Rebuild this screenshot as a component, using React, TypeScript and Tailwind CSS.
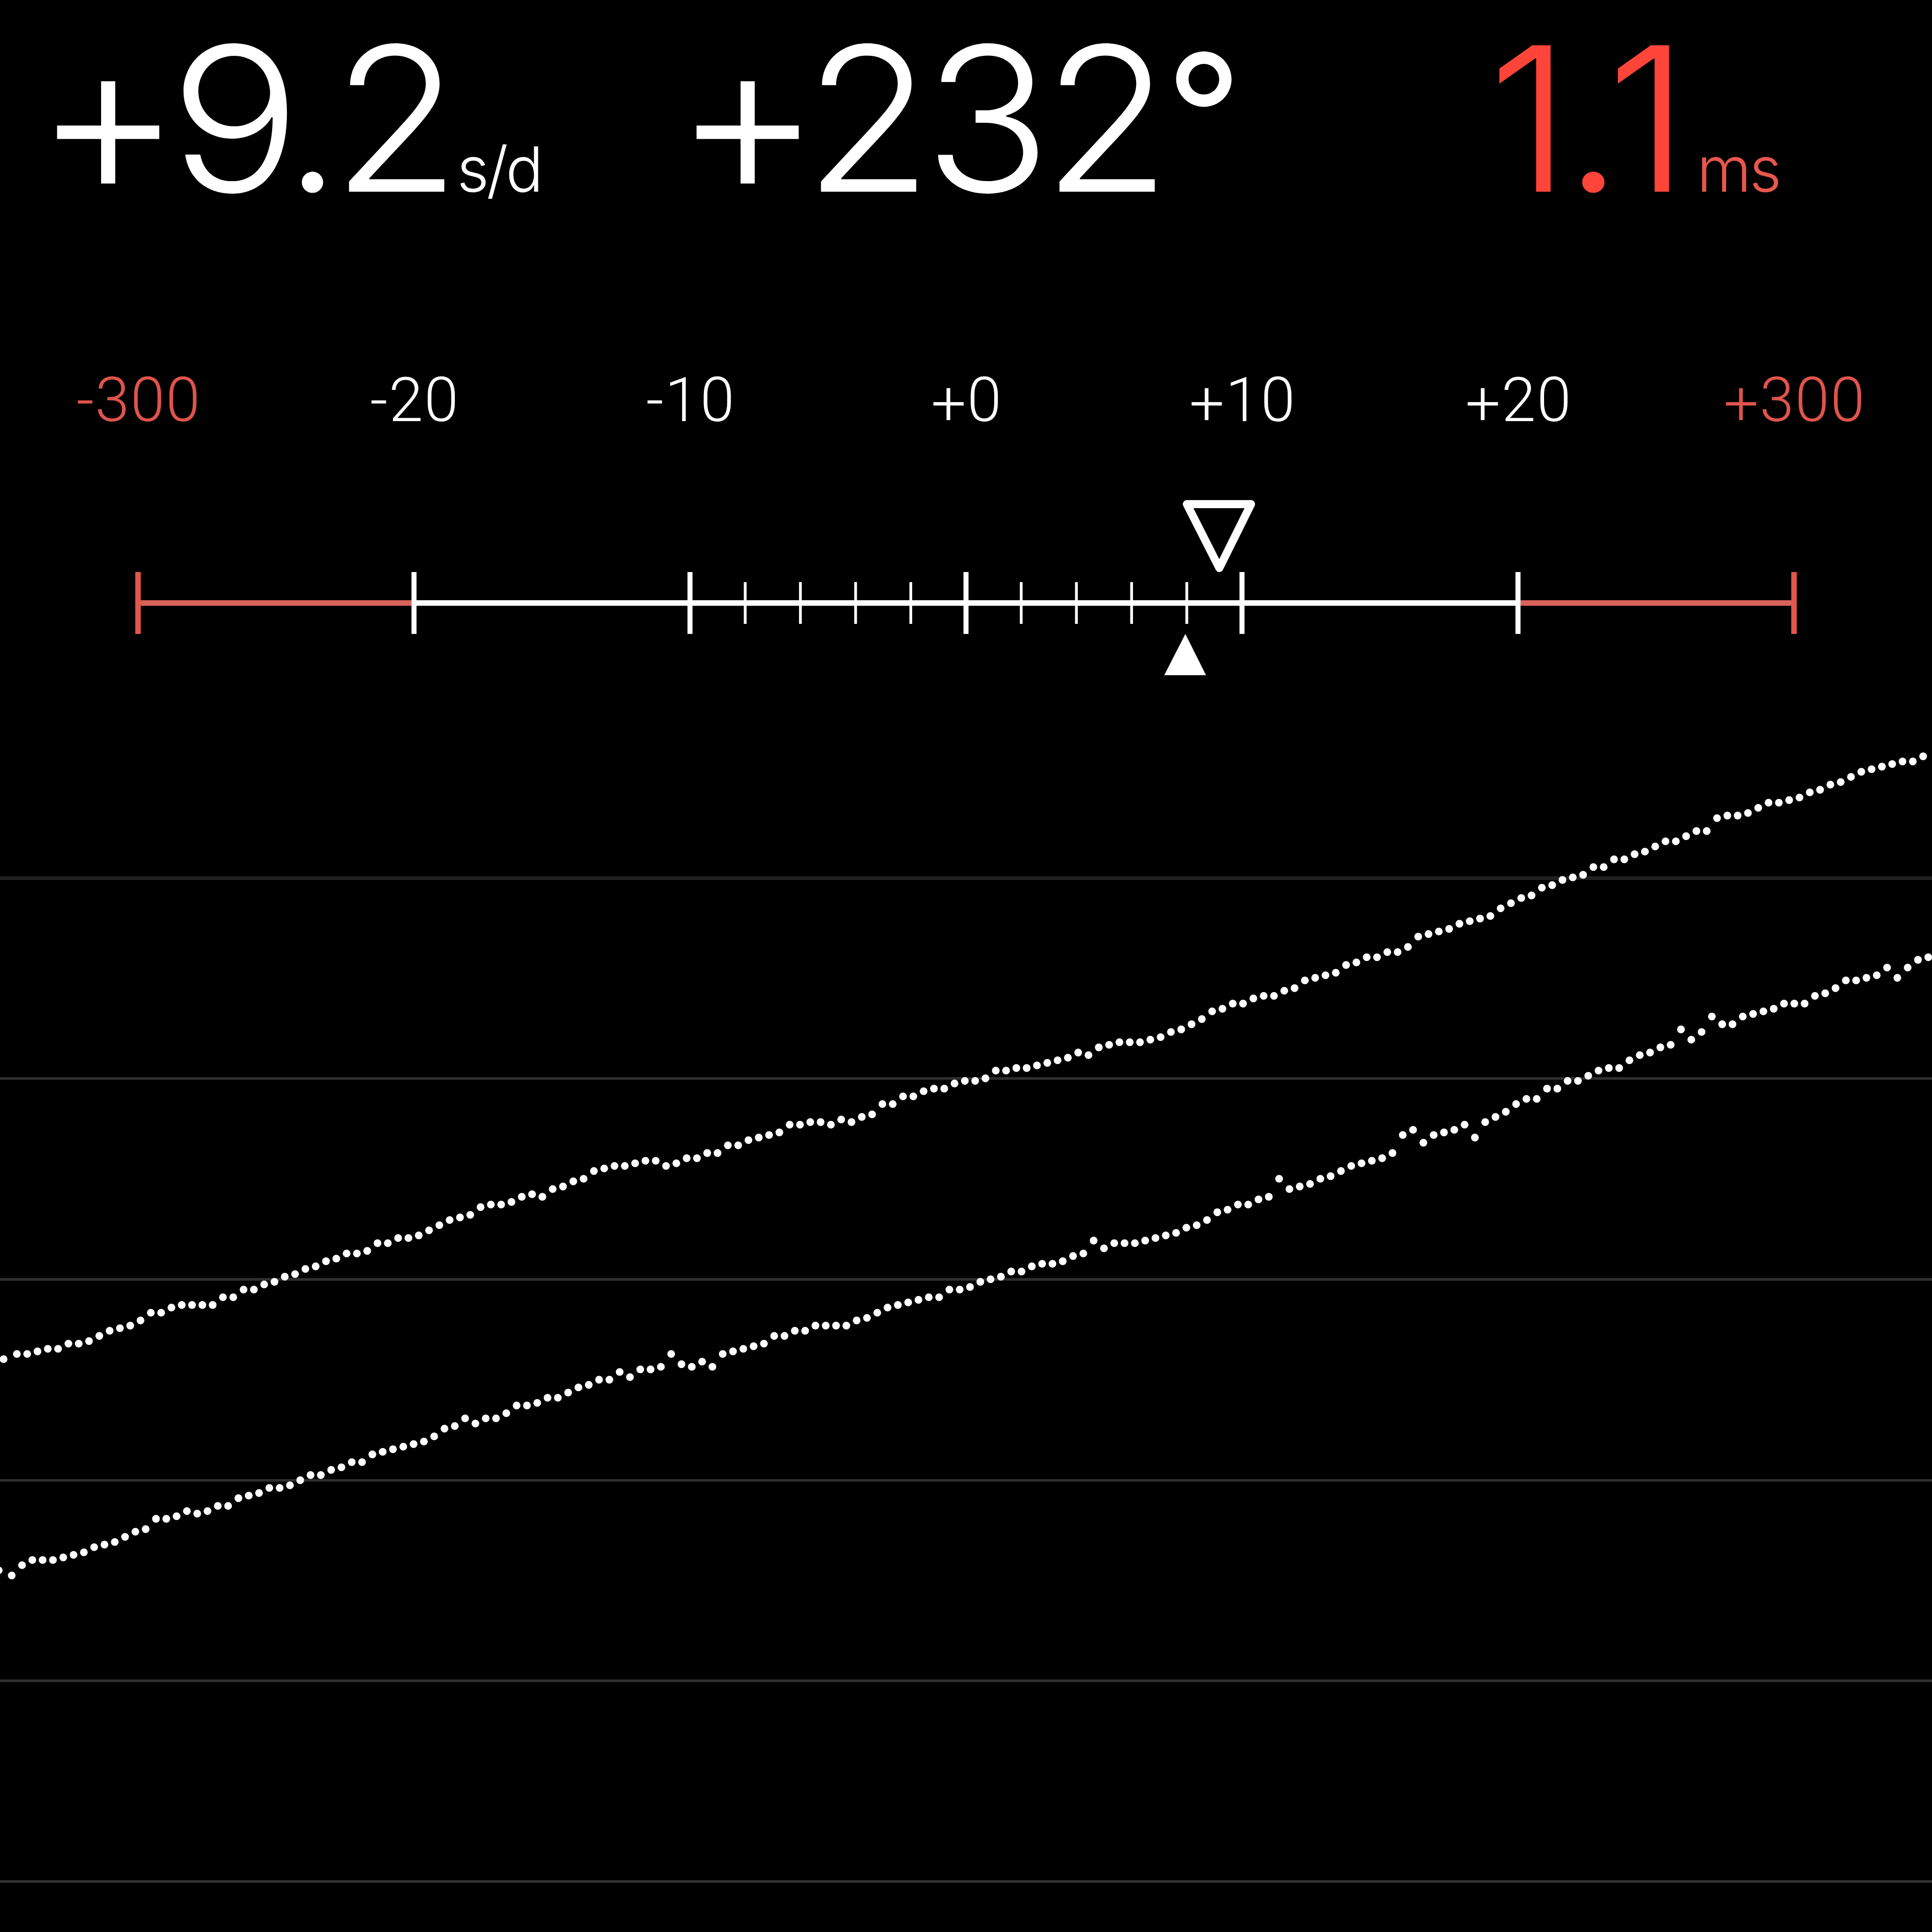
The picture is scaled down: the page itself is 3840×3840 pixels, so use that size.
const UPPER = [
  525, 525, 524, 523, 523, 521, 521, 520, 518, 516, 515, 514, 512, 509, 509, 507, 506, 506, 506, 506, 503, 503, 500, 500,
  498, 497, 495, 494, 492, 491, 489, 488, 486, 486, 485, 482, 482, 480, 480, 479, 477, 475, 473, 472, 471, 468, 467, 467,
  466, 464, 463, 464, 461, 460, 458, 457, 454, 453, 452, 452, 451, 450, 450, 452, 451, 449, 449, 447, 447, 444, 444, 442,
  441, 440, 439, 436, 436, 435, 435, 436, 434, 435, 433, 432, 428, 428, 425, 425, 423, 422, 422, 420, 419, 419, 418, 415,
  415, 414, 414, 413, 412, 411, 410, 408, 409, 406, 405, 404, 404, 404, 403, 402, 400, 399, 397, 395, 392, 391, 389, 389,
  387, 386, 386, 384, 383, 380, 379, 378, 377, 374, 373, 371, 371, 369, 369, 367, 363, 362, 361, 360, 358, 357, 356, 355,
  352, 350, 348, 347, 344, 343, 341, 340, 339, 336, 336, 333, 333, 331, 330, 328, 326, 326, 324, 322, 322, 317, 316, 316,
  315, 313, 311, 311, 310, 309, 307, 306, 304, 303, 301, 299, 298, 297, 296, 295, 295, 293,
]

const LOWER = [
  611, 607, 605, 605, 605, 604, 603, 602, 600, 599, 598, 596, 594, 593, 589, 589, 588, 586, 587, 586, 584, 584, 581, 580,
  579, 577, 577, 576, 574, 572, 572, 570, 569, 567, 567, 564, 563, 562, 561, 560, 559, 557, 554, 553, 550, 552, 550, 550,
  548, 545, 545, 544, 542, 542, 540, 538, 537, 535, 535, 532, 534, 531, 531, 530, 525, 529, 530, 528, 530, 525, 524, 523,
  522, 521, 518, 518, 516, 516, 514, 514, 514, 514, 512, 511, 509, 507, 506, 505, 504, 503, 503, 500, 500, 499, 497, 496,
  495, 493, 493, 491, 490, 490, 489, 487, 486, 481, 484, 482, 482, 482, 481, 480, 479, 478, 476, 475, 473, 470, 469, 467,
  467, 465, 464, 457, 461, 460, 459, 457, 456, 454, 452, 451, 450, 449, 447, 440, 438, 443, 440, 439, 438, 436, 441, 435,
  433, 431, 428, 426, 426, 422, 422, 419, 419, 417, 415, 414, 414, 411, 409, 408, 406, 405, 399, 403, 400, 394, 397, 397,
  394, 393, 392, 391, 389, 389, 389, 386, 385, 383, 380, 380, 379, 378, 375, 379, 375, 372, 371,
]

const GRID = [418.65, 496.65, 574.65, 652.5, 730.4]

const LABELS = ['-300', '-20', '-10', '+0', '+10', '+20', '+300']

const MAJOR = [1, 2, 3, 4, 5]
const MINOR = [1, 2, 3, 4, 6, 7, 8, 9]
const STEP = 3840 / 7

function Plus() {
  return <span className="align-[-10px] text-[450px] leading-[450px]">+</span>
}

function Readouts() {
  return (
    <header className="grid h-[680px] grid-cols-3 items-start text-[400px] leading-[470px] font-light whitespace-nowrap text-white">
      <div className="pl-[68px]">
        <Plus />
        <span className="-ml-[25px] inline-block origin-left scale-x-[1.085]">9</span>
        <span className="-ml-[13px]">.</span>
        <span className="-ml-[18px] inline-block origin-left scale-x-[1.04]">2</span>
        <span className="ml-[3px] text-[124px] tracking-[-5px]">s/d</span>
      </div>
      <div className="pl-[59px]">
        <Plus />
        <span className="-ml-[35px] inline-block origin-left scale-x-[1.04] tracking-[-16px]">232</span>
        <span className="ml-[33px] align-[33px] text-[335px] leading-[400px] font-normal">°</span>
      </div>
      <div className="pl-[397px] text-[#ff453a]">
        <span className="inline-block origin-left scale-x-[1.05]">
          1<span className="-ml-[14px]">.</span>
          <span className="-ml-[32px]">1</span>
        </span>
        <span className="ml-[34px] text-[124px] tracking-[-4px] text-[#e8574e]">ms</span>
      </div>
    </header>
  )
}

function ScaleLabels() {
  return (
    <div className="grid h-[230px] grid-cols-7 pt-[60px] text-center font-['Roboto',sans-serif] text-[123px] leading-[110px] font-light tracking-[2px] text-white">
      {LABELS.map((label, i) => (
        <div key={label} className={i === 0 || i === 6 ? 'pl-[3px] text-[#e0544c]' : 'pl-[3px]'}>
          <span className={label[0] === '+' ? 'align-[-7px] leading-[90px]' : ''}>{label[0]}</span>
          {label.slice(1)}
        </div>
      ))}
    </div>
  )
}

function Scale() {
  return (
    <svg viewBox="0 910 3840 490" className="block h-[490px] w-full" fill="none">
      <g stroke="#d9625a" strokeWidth="11">
        <path d={`M${STEP / 2} 1198.5H${STEP * 1.5}M${STEP * 5.5} 1198.5H${STEP * 6.5}`} />
        <path stroke="#e4554b" d={`M${STEP / 2} 1137V1260M${STEP * 6.5} 1137V1260`} />
      </g>
      <g stroke="#fff">
        <path strokeWidth="11" d={`M${STEP * 1.5} 1198.5H${STEP * 5.5}`} />
        {MAJOR.map((n) => (
          <path key={n} strokeWidth="10" d={`M${STEP * (n + 0.5)} 1137V1260`} />
        ))}
        {MINOR.map((n) => (
          <path key={n} strokeWidth="5.5" d={`M${STEP * (2.5 + n / 5)} 1157V1240`} />
        ))}
        <path strokeWidth="16" strokeLinejoin="round" d="M2359 1002H2486.5L2423.5 1129Z" />
      </g>
      <path fill="#fff" d="M2356 1260L2397 1342H2314Z" />
    </svg>
  )
}

function Trace() {
  return (
    <svg viewBox="0 273.4375 750 476.5625" className="block h-[2440px] w-full">
      <path d="M0 340.9H750" stroke="#222" strokeWidth="1.4" />
      {GRID.map((y) => (
        <path key={y} d={`M0 ${y}H750`} stroke="#303030" strokeWidth="1" />
      ))}
      <g fill="#fff">
        <circle cx="1.4" cy="527.6" r="1.5" />
        <circle cx="-0.5" cy="609.6" r="1.5" />
        {UPPER.map((y, i) => (
          <circle key={i} cx={6.55 + i * 4} cy={y + 0.6} r="1.5" />
        ))}
        {LOWER.map((y, i) => (
          <circle key={i} cx={4.55 + i * 4} cy={y + 0.6} r="1.5" />
        ))}
      </g>
    </svg>
  )
}

export default function App() {
  return (
    <main className="h-[3840px] w-[3840px] overflow-hidden bg-black font-['Inter',sans-serif]">
      <Readouts />
      <ScaleLabels />
      <Scale />
      <Trace />
    </main>
  )
}
